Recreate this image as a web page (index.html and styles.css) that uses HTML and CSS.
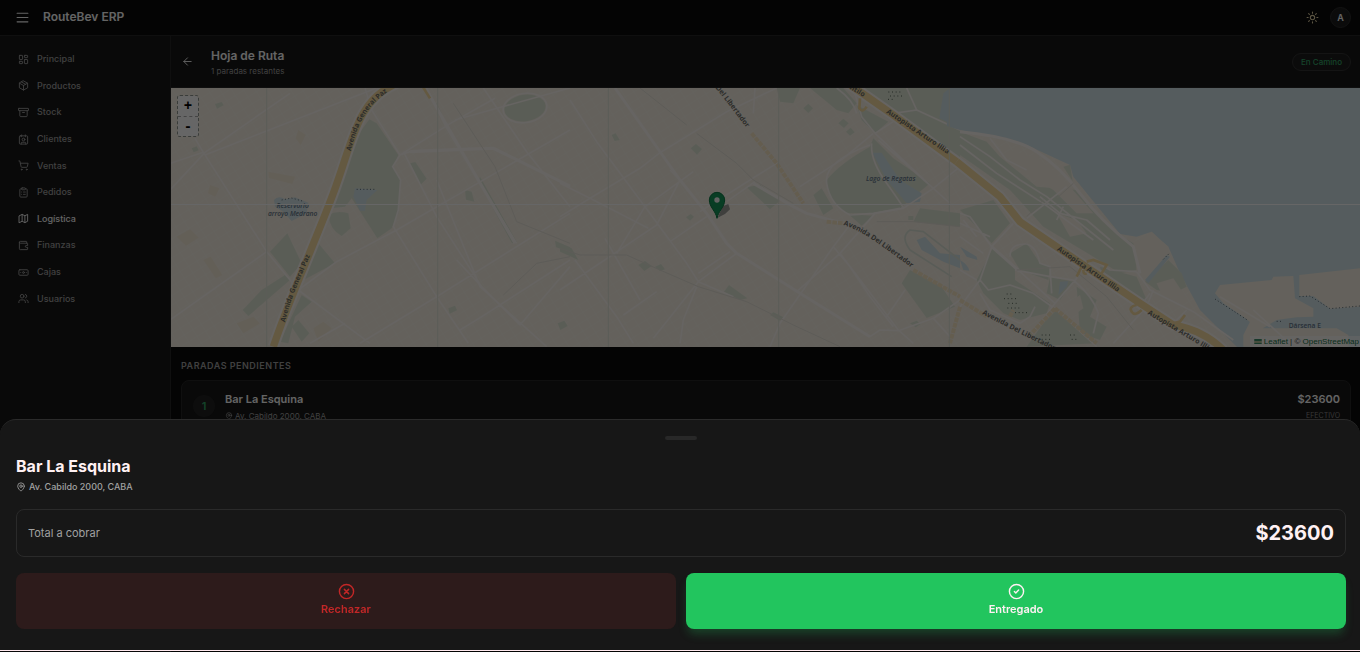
FILE: index.html
```html
<!DOCTYPE html>
<html lang="es">
<head>
    <meta charset="UTF-8">
    <meta name="viewport" content="width=device-width, initial-scale=1.0">
    <title>RouteBev ERP</title>
    <link rel="stylesheet" href="styles.css">
</head>
<body>
    <div class="app">
        <header class="topbar">
            <button class="icon-btn" aria-label="Menú">
                <svg class="icon menu-icon" viewBox="0 0 24 24"><path d="M2 4h20M2 12h20M2 20h20"/></svg>
            </button>
            <span class="brand">RouteBev ERP</span>
            <button class="icon-btn theme" aria-label="Tema">
                <svg class="icon" viewBox="0 0 24 24"><circle cx="12" cy="12" r="4"/><path d="M12 2v2M12 20v2M4.9 4.9l1.4 1.4M17.7 17.7l1.4 1.4M2 12h2M20 12h2M6.3 17.7l-1.4 1.4M19.1 4.9l-1.4 1.4"/></svg>
            </button>
            <button class="avatar">A</button>
        </header>

        <div class="body">
            <aside class="sidebar">
                <nav class="menu">
                    <a href="#"><svg class="icon" viewBox="0 0 24 24"><rect x="3" y="3" width="7" height="9" rx="1"/><rect x="14" y="3" width="7" height="5" rx="1"/><rect x="14" y="12" width="7" height="9" rx="1"/><rect x="3" y="16" width="7" height="5" rx="1"/></svg>Principal</a>
                    <a href="#"><svg class="icon" viewBox="0 0 24 24"><path d="M12 2l9 5v10l-9 5-9-5V7zM3.300 7L12 12l8.700-5M12 22V12M7.500 4.300l9 5.100"/></svg>Productos</a>
                    <a href="#"><svg class="icon" viewBox="0 0 24 24"><rect x="1" y="3" width="22" height="5" rx="1"/><path d="M4 8v11a2 2 0 0 0 2 2h12a2 2 0 0 0 2-2V8M10 12h4"/></svg>Stock</a>
                    <a href="#"><svg class="icon" viewBox="0 0 24 24"><rect x="3" y="4" width="18" height="18" rx="2"/><path d="M8 2v4M16 2v4M7 22v-2a2 2 0 0 1 2-2h6a2 2 0 0 1 2 2v2"/><circle cx="12" cy="12" r="3"/></svg>Clientes</a>
                    <a href="#"><svg class="icon" viewBox="0 0 24 24"><circle cx="8" cy="21" r="1"/><circle cx="19" cy="21" r="1"/><path d="M2 2h2l2.700 12.400a2 2 0 0 0 2 1.600h9.700a2 2 0 0 0 2-1.600L22 7H5.100"/></svg>Ventas</a>
                    <a href="#"><svg class="icon" viewBox="0 0 24 24"><rect x="8" y="2" width="8" height="4" rx="1"/><path d="M16 4h2a2 2 0 0 1 2 2v14a2 2 0 0 1-2 2H6a2 2 0 0 1-2-2V6a2 2 0 0 1 2-2h2M12 11h4M12 16h4M8 11h.1M8 16h.1"/></svg>Pedidos</a>
                    <a href="#" class="active"><svg class="icon" viewBox="0 0 24 24"><path d="M3 6l6-3 6 3 6-3v15l-6 3-6-3-6 3zM9 3v15M15 6v15"/></svg>Logística</a>
                    <a href="#"><svg class="icon" viewBox="0 0 24 24"><path d="M19 7V4a1 1 0 0 0-1-1H5a2 2 0 0 0 0 4h15a1 1 0 0 1 1 1v4h-3a2 2 0 0 0 0 4h3v4a1 1 0 0 1-1 1H5a2 2 0 0 1-2-2V5"/></svg>Finanzas</a>
                    <a href="#"><svg class="icon" viewBox="0 0 24 24"><rect x="2" y="6" width="20" height="12" rx="2"/><circle cx="12" cy="12" r="2"/><path d="M6 12h.1M18 12h.1"/></svg>Cajas</a>
                    <a href="#"><svg class="icon" viewBox="0 0 24 24"><circle cx="9" cy="7" r="4"/><path d="M2 21v-2a4 4 0 0 1 4-4h6a4 4 0 0 1 4 4v2M16 3.100a4 4 0 0 1 0 7.800M22 21v-2a4 4 0 0 0-3-3.900"/></svg>Usuarios</a>
                </nav>
            </aside>

            <main class="content">
                <div class="page-head">
                    <button class="icon-btn" aria-label="Volver">
                        <svg class="icon" viewBox="0 0 24 24"><path d="M20 12H4M12 20l-8-8 8-8"/></svg>
                    </button>
                    <div class="page-title">
                        <h1>Hoja de Ruta</h1>
                        <p>1 paradas restantes</p>
                    </div>
                    <span class="status">En Camino</span>
                </div>

                <div class="map">
                    <!-- 3 unidades por píxel -->
                    <svg class="map-canvas" viewBox="0 0 3567 777" preserveAspectRatio="xMidYMid slice">
                        <defs>
                            <pattern id="grid" width="30" height="24" patternUnits="userSpaceOnUse" patternTransform="rotate(-32)">
                                <path d="M0 0H30M0 0V24" class="street"/>
                            </pattern>
                            <path id="paz1" d="M542 214C560 150 575 90 652 36L700 8"/>
                            <path id="paz2" d="M345 728C365 640 400 580 425 515L440 470"/>
                            <path id="lib1" d="M466 24L480 40L580 170L600 196"/>
                            <path id="lib2" d="M850 435C920 455 990 520 1080 580"/>
                            <path id="illia0" d="M868 26L940 68L980 92"/>
                            <path id="illia1" d="M978 98L1190 241"/>
                            <path id="illia2" d="M290 510L500 654"/>
                            <path id="illia3" d="M562 702L790 838"/>
                            <path id="lib3" d="M66 702L170 756L290 815L330 835"/>
                        </defs>
                        <rect width="3567" height="777" class="land"/>
                        <rect width="3567" height="777" fill="url(#grid)"/>

                        <!-- zona oeste -->
                        <g transform="translate(-3 -24)">
                            <g class="block">
                                <path d="M295 275l80 15-8 22-70-18zM20 470l40-22 26 25-38 24zM100 540l22-10 35 55-20 10zM430 745l30-20 25 20-40 40zM385 150l22 15-15 30-15-20zM120 315l28 10-12 25-22-10zM200 730l50-20 20 20-50 30z"/>
                            </g>
                            <g class="park">
                                <path d="M598 118L620 130 685 225 670 260 690 300 685 400 665 445 622 475 545 355 525 380 480 385 520 280 560 170z"/>
                                <path d="M475 405Q500 390 535 400L542 445 515 468Q480 450 475 405zM352 460L395 550 360 590 300 515zM445 490L495 550 405 598zM345 585L360 600 235 708 218 690 275 630zM395 645L425 665 375 710 355 790 330 785zM365 740L385 720 418 760 395 785z"/>
                                <ellipse cx="1065" cy="84" rx="62" ry="40" transform="rotate(-8 1065 84)"/>
                                <path d="M135 72l20-6 6 10-20 10zM720 250l16-4 34 50-18 18zM885 330l20 5 8 30-25-6zM1155 482l45 20v14l-42-14zM835 685l20-8 6 14-22 10zM1163 730l20-8 10 16-22 12zM65 205l15-6 6 12-15 6zM800 70l20 40-8 5-16-40zM930 290l110 195-14 5-100-185z"/>
                            </g>
                            <path class="water" d="M312 360Q325 345 345 358L375 352 415 368 410 400 365 423 340 395 315 380zM555 325L622 330 590 360 585 392 570 392 550 350z"/>
                            <g class="road">
                                <path d="M0 330L105 217 360 40M100 217L290 515 385 630 600 790M0 720L290 515M385 630L500 545 680 450 1200 150M75 175L100 217L0 250M690 225L605 90 585 24M690 225L850 125 975 55M690 225L730 212 900 205 975 205 1200 320M690 225L668 260 692 300 685 390 670 440 800 650 895 790M420 790L525 730M570 790L800 650 1200 400M800 300L930 620 1130 800M940 24L1070 215 1200 380M770 24L830 145 1040 490M855 120L1200 24M870 750L935 710 1200 540M105 225L620 24M700 215L800 410 935 620 1050 735 1200 560M935 620L860 540"/>
                                <ellipse cx="1065" cy="84" rx="66" ry="44" transform="rotate(-8 1065 84)"/>
                            </g>
                            <path class="road wide" d="M770 30L870 205 1035 490M720 215L970 205 1200 318"/>
                            <path class="rail" d="M850 70L975 260 1040 425 1200 490M1000 645L1100 550 1200 530"/>
                            <path class="highway-edge" d="M310 800C360 650 430 500 490 340S560 60 680 10"/>
                            <path class="highway" d="M310 800C360 650 430 500 490 340S560 60 680 10"/>
                            <path class="highway thin" d="M755 15l25 40"/>
                            <path class="dock" d="M335 360l30-6 35 10M560 328h60"/>
                            <text class="street-name"><textPath href="#paz1">Avenida General Paz</textPath></text>
                            <text class="street-name"><textPath href="#paz2">Avenida General Paz</textPath></text>
                            <text class="water-name" x="368" y="384" text-anchor="middle">Reservorio</text>
                            <text class="water-name" x="368" y="409" text-anchor="middle">arroyo Medrano</text>
                        </g>

                        <!-- zona centro -->
                        <g transform="translate(1167 -24)">
                            <g class="park">
                                <path d="M650 24H720L700 70 660 65zM750 24L850 24 890 70 865 100 830 90zM940 175L1000 235 1110 310 1020 385 940 400 860 400Q800 360 800 300 840 250 930 200zM870 24H1200V250L1000 110zM890 75L985 125 945 160 905 120zM560 322l40-8 60 48-30 26-20-20zM760 345l25-20 35 60-30 20zM865 402l75 5-35 30zM1050 570L1145 620 1185 680 1100 714 1025 610zM1080 385L1200 400V440L1060 425z"/>
                                <path d="M392 205l16-13 18 15-15 17zM155 165l12-5 12 20-15 3zM235 555l20-12 20 15-22 15zM285 560l18-8 12 16-15 5zM492 635l15-20 55 40-22 5zM378 412l14-10 10 8-12 12zM835 130l15-14 16 14-14 14zM858 155l14-12 12 14-14 10zM730 85l15-14 14 14-14 14zM0 490l35 15 20 35-55-25zM630 705l10-8 30 15-10 10zM1045 408h15v12h-15zM1050 730l20-8 12 10-15 10z"/>
                            </g>
                            <path class="water" d="M937 218L965 218 1020 300 1085 340 1080 365 1040 370 980 300zM1150 40L1170 24H1200V145L1138 115zM1070 480L1095 470 1140 520 1200 525V565L1150 545 1085 510z"/>
                            <g class="road">
                                <path d="M0 410L90 355 240 265 300 218 500 95 650 24M30 60L110 185 255 380 380 550 415 605M0 310L90 355 265 445M45 540L170 710 220 790M0 630L290 435 360 300 330 270M135 475L240 660M170 520L255 380 400 275M190 705L290 635M420 395L650 250M330 485L440 410M500 365L585 305M415 605L530 520M415 580L510 515M585 24L580 100M360 790L370 720 410 620M630 800L660 730 820 500 865 440M840 520L945 400 1020 385M280 775L415 605 520 650M710 635L840 520M840 520L1015 750 1060 790M980 710L1035 630M930 770L960 750 1015 752 1120 715 1200 660M1120 715L1170 770M720 320L850 235 940 160M820 500L870 560 930 650 1000 740"/>
                                <path d="M930 195Q790 245 800 310T870 405L940 400 1030 385 1120 325 1200 260M935 190Q930 240 980 310T1030 385M955 180L1120 325M880 24L905 110 945 160 1000 125M830 24Q880 60 890 100M945 160L1120 325 1170 370M1040 24L1070 90 1200 150M1000 100L1070 90"/>
                                <path d="M1175 590L1050 510Q1020 470 1050 450L1090 455 1200 540" class="track"/>
                            </g>
                            <path class="road wide" d="M165 24L360 300 440 400 500 490 530 520 720 640 930 770M580 310L700 380 740 400 850 430"/>
                            <path class="rail" d="M240 24L380 135M410 160L530 250 580 300 700 370M0 505L60 525 200 525 300 570 415 620 560 665 700 735 840 800M950 425L1060 425 1200 440"/>
                            <path class="avenue" d="M575 160L650 250 730 370M800 425L850 430M1060 570L1200 650M1200 680L1170 790"/>
                            <path class="highway-edge" d="M850 0L1000 105 1210 260"/>
                            <path class="highway" d="M850 0L1000 105 1210 260"/>
                            <path class="highway thin" d="M900 55L898 85Q908 100 920 80"/>
                            <text class="street-name"><textPath href="#lib1">Del Libertador</textPath></text>
                            <text class="street-name"><textPath href="#lib2">Avenida Del Libertador</textPath></text>
                            <text class="street-name"><textPath href="#illia0">ntilo</textPath></text>
                            <text class="street-name"><textPath href="#illia1">Autopista Arturo Illia</textPath></text>
                            <text class="water-name" x="992" y="302" text-anchor="middle">Lago de Regatas</text>
                            <g class="trees"><path d="M985 36h40M990 48h36M984 58h22"/></g>
                        </g>

                        <!-- costanera y río -->
                        <g transform="translate(2367 -24)">
                            <path class="water" d="M-30 24H1210V820H850L720 690 660 580 625 500 575 455 530 470 480 462 340 290 330 255 200 195 0 150-40 138z"/>
                            <path class="park" d="M0 155L80 185 120 230 230 320 350 330 470 460 520 490 530 570 480 580 400 530 250 440 150 330 0 225zM310 260l20-6 8 50zM0 390L100 360 150 430 95 490 50 440zM100 500L165 560 165 600 270 670 260 700 180 720 130 700 70 640 50 600zM150 520L200 490 240 550 270 560 265 600 180 570zM270 590L340 605 300 660 260 640zM555 605L625 540 665 580 680 620 640 640 590 630zM420 560L530 590 560 660 480 640 430 600zM350 620L410 660 390 710 440 740 420 780 360 760zM250 730L290 690 410 790 200 800z"/>
                            <path class="land" d="M150 210L240 240 330 320 400 400 350 400 280 330 160 260zM530 490L575 455 600 480 625 500 625 525 560 600 530 570zM765 640L780 615 935 600 940 590 1000 588 1005 655 1060 685 1060 710 1010 712 950 720 900 750 850 710 790 670zM1018 585L1200 565V680L1110 686 1060 648 1018 648zM850 765L870 725 900 745 1130 745 1165 765 1165 800 850 800z"/>
                            <path class="land" d="M290 400l60 20 30 40-50 10zM590 610l50-15 40 60-60 20zM330 665l30-20 10 40-20 15z"/>
                            <path class="water" d="M555 600L620 525 630 530 565 610zM300 605L325 603 320 620 295 645zM0 500L50 530 52 540 20 530zM0 540Q25 555 28 572L10 570z"/>
                            <g class="road">
                                <path d="M0 170L90 230 180 300 260 350 460 510M0 195L110 280 250 370 400 480M90 175L140 240 200 270M240 350L300 400 380 420 450 480M200 415L320 320M290 420L310 380"/>
                                <path d="M95 500L160 430M95 500L60 600 0 680M95 500L30 410 0 400M95 500L180 575 285 670 350 595 360 570M0 430L90 470M10 420L50 470M60 600L85 630 150 615 220 640 290 690M150 530Q150 490 200 492 230 500 240 550L270 560 275 640M165 570L270 590 340 600M60 640L90 690 180 730 210 710 225 680M285 670L210 770M340 600Q400 650 415 700L400 760M290 690L410 800M400 540L450 570 530 575M530 575L570 630 700 695 820 780M580 630L560 680 460 790M680 690L640 730M570 640L555 660M0 470L70 520M50 600L0 570"/>
                                <path d="M880 690L1000 800M780 650l150 90"/>
                            </g>
                            <path class="road wide" d="M0 155Q160 170 230 215T360 340 520 500L540 580M95 500L180 575"/>
                            <path class="rail" d="M170 570L330 560 440 650 520 750M200 410L250 360M290 355L340 310"/>
                            <path class="avenue" d="M0 660L80 710M285 685L210 765M285 685L410 790M150 710L160 690"/>
                            <path class="highway-edge" d="M-10 245L120 350 180 425 370 555 540 670 640 735Q730 750 790 810"/>
                            <path class="highway" d="M-10 245L120 350 180 425 370 555 540 670 640 735Q730 750 790 810"/>
                            <path class="highway thin" d="M370 550L350 590M380 545L400 540 440 555 425 580M530 675Q505 680 515 695T545 690M640 730L660 725 675 705M370 570Q370 585 380 580"/>
                            <g class="trees"><path d="M140 642h20M132 656h40M145 670h28M142 684h36M165 698h42M245 765h28M245 778h30M330 765h20M335 778h18"/></g>
                            <path class="dock" d="M765 657L865 722M1018 650L1050 648 1110 686 1200 678M950 724h20M610 538l20-20"/>
                            <text class="street-name"><textPath href="#illia2">Autopista Arturo Illia</textPath></text>
                            <text class="street-name"><textPath href="#illia3">Autopista Arturo Illia</textPath></text>
                            <text class="street-name"><textPath href="#lib3">Avenida Del Libertador</textPath></text>
                            <text class="water-name plain" x="986" y="744">Dársena E</text>
                        </g>

                        <!-- uniones de teselas -->
                        <path class="tile-v" d="M287 0V777M800 0V777M1312 0V777M1823 0V777M2335 0V777"/>
                        <path class="tile-h" d="M0 349.500H3567"/>

                        <!-- marcador -->
                        <path class="pin-shadow" d="M1640 389L1655 355 1672 348 1677 364 1662 378z"/>
                        <path class="pin" d="M1638 391C1634 368 1615 358 1615 336a23 23 0 0 1 46 0C1661 358 1642 368 1638 391z"/>
                        <circle class="pin-hole" cx="1638" cy="336" r="8"/>
                    </svg>
                    <div class="zoom-control">
                        <button aria-label="Acercar">+</button>
                        <button aria-label="Alejar">-</button>
                    </div>
                    <div class="attribution">
                        <svg class="flag" viewBox="0 0 12 8"><path fill="#3f8f6b" d="M0 0h12v4H0z"/><path fill="#c9c28a" d="M0 4h12v2H0z"/><path fill="#3f8f6b" d="M0 6h12v2H0z"/></svg>
                        <a href="#">Leaflet</a> | © <a href="#">OpenStreetMap</a>
                    </div>
                </div>

                <section class="stops">
                    <h2>PARADAS PENDIENTES</h2>
                    <article class="stop">
                        <span class="stop-num">1</span>
                        <div class="stop-info">
                            <h3>Bar La Esquina</h3>
                            <p><svg class="icon" viewBox="0 0 24 24"><path d="M20 10c0 6-8 12-8 12s-8-6-8-12a8 8 0 0 1 16 0z"/><circle cx="12" cy="10" r="3"/></svg>Av. Cabildo 2000, CABA</p>
                        </div>
                        <div class="stop-total">
                            <strong>$23600</strong>
                            <small>EFECTIVO</small>
                        </div>
                    </article>
                </section>
            </main>
        </div>
    </div>

    <div class="backdrop"></div>

    <div class="sheet" role="dialog" aria-labelledby="sheet-title">
        <div class="handle"></div>
        <h2 id="sheet-title">Bar La Esquina</h2>
        <p class="address"><svg class="icon" viewBox="0 0 24 24"><path d="M20 10c0 6-8 12-8 12s-8-6-8-12a8 8 0 0 1 16 0z"/><circle cx="12" cy="10" r="3"/></svg>Av. Cabildo 2000, CABA</p>
        <div class="total">
            <span>Total a cobrar</span>
            <strong>$23600</strong>
        </div>
        <div class="actions">
            <button class="reject">
                <svg class="icon" viewBox="0 0 24 24"><circle cx="12" cy="12" r="10"/><path d="M15 9l-6 6M9 9l6 6"/></svg>
                Rechazar
            </button>
            <button class="deliver">
                <svg class="icon" viewBox="0 0 24 24"><circle cx="12" cy="12" r="10"/><path d="M9 12l2 2 4-4"/></svg>
                Entregado
            </button>
        </div>
    </div>
</body>
</html>
```
FILE: styles.css
```css
* {
    box-sizing: border-box;
    margin: 0;
    padding: 0;
}
body {
    font-family: Inter, sans-serif;
    font-size: 9px;
    line-height: 14px;
    color: #fafafa;
    background: #0a0a0a;
    height: 100vh;
    overflow: hidden;
}
button {
    font: inherit;
    color: inherit;
    border: none;
    background: none;
    cursor: pointer;
}
a {
    color: inherit;
    text-decoration: none;
}
.icon {
    width: 11px;
    height: 11px;
    fill: none;
    stroke: currentColor;
    stroke-width: 2;
    stroke-linecap: round;
    stroke-linejoin: round;
    flex-shrink: 0;
}
.icon-btn {
    display: flex;
    align-items: center;
    justify-content: center;
    width: 24px;
    height: 24px;
}
.app {
    display: flex;
    flex-direction: column;
    height: 100%;
}

/* Barra superior */
.topbar {
    display: flex;
    align-items: center;
    height: 36px;
    padding: 0 9px 0 10px;
    border-bottom: 1px solid #262626;
}
.brand {
    font-size: 12px;
    font-weight: 600;
    margin-left: 9px;
    padding-bottom: 1px;
}
.theme {
    margin-left: auto;
    margin-right: 6px;
    color: #e5d5a8;
}
.menu-icon,
.theme .icon {
    width: 13px;
    height: 13px;
}
.avatar {
    width: 21px;
    height: 21px;
    border: 1px solid #2e2e2e;
    border-radius: 50%;
    background: #1c1c1c;
    font-weight: 600;
}

/* Menú lateral */
.body {
    display: flex;
    flex: 1;
    min-height: 0;
}
.sidebar {
    width: 171px;
    flex-shrink: 0;
    padding: 10px;
    background: #171717;
    border-right: 1px solid #262626;
}
.menu {
    display: grid;
    grid-template-rows: repeat(10, 1fr);
    height: 266px;
}
.menu a {
    display: flex;
    align-items: center;
    gap: 8px;
    padding: 0 8px;
    font-weight: 500;
    color: #a1a1a1;
}
.menu a.active {
    color: #fafafa;
}

/* Contenido */
.content {
    flex: 1;
    min-width: 0;
}
.page-head {
    display: flex;
    align-items: center;
    height: 52px;
    padding: 0 9px 0 4px;
    background: #171717;
    border-bottom: 1px solid #262626;
}
.page-title {
    flex: 1;
    margin-left: 12px;
    padding-top: 2px;
}
.page-title h1 {
    font-size: 12px;
    line-height: 16px;
    font-weight: 600;
}
.page-title p {
    font-size: 8px;
    color: #a1a1a1;
}
.status {
    padding: 1px 8px;
    border: 1px solid #333;
    border-radius: 9px;
    background: #1c1c1c;
    font-size: 8px;
    font-weight: 500;
    color: #35a86b;
}

/* Mapa */
.map {
    position: relative;
    height: 259px;
    overflow: hidden;
}
.map-canvas {
    display: block;
    width: 100%;
    height: 100%;
    fill: none;
}
.land { fill: #f9f3e6; }
.water { fill: #d5e6ea; }
.park { fill: #e2e9d8; }
.block { fill: #f8edda; }
.street { stroke: #fcf8f1; stroke-width: 2; }
.road { stroke: #fff9f4; stroke-width: 5; stroke-linejoin: round; }
.wide { stroke-width: 9; }
.track { stroke: #dfe6da; }
.rail { stroke: #e9e5db; stroke-width: 3; }
.avenue { stroke: #f9e8c6; stroke-width: 12; stroke-dasharray: 14 3; }
.highway-edge { stroke: #fffaf4; stroke-width: 34; }
.highway { stroke: #f9dfa2; stroke-width: 22; }
.thin { stroke-width: 8; }
.trees { stroke: #5d6a5c; stroke-width: 3; stroke-dasharray: 3 8; }
.dock { stroke: #5d6d78; stroke-width: 3; stroke-dasharray: 3 7; }
.tile-v { stroke: #e4e6da; stroke-width: 3; }
.tile-h { stroke: #fff; stroke-width: 3; }
.street-name {
    font: 700 21px "Open Sans", sans-serif;
    fill: #6f6f6a;
}
.water-name {
    font: italic 600 20px "Open Sans", sans-serif;
    fill: #66788a;
}
.plain { font-style: normal; }
.pin { fill: #16995a; stroke: #0c7a45; stroke-width: 3; }
.pin-hole { fill: #f4f4f4; }
.pin-shadow { fill: #777; opacity: 0.7; }
.zoom-control {
    position: absolute;
    top: 7px;
    left: 6px;
    border: 1px dashed #8f9691;
    border-radius: 3px;
    overflow: hidden;
}
.zoom-control button {
    display: block;
    width: 20px;
    height: 20px;
    background: #fff;
    color: #000;
    font: bold 14px/20px "Liberation Mono", monospace;
}
.zoom-control button + button {
    border-top: 1px dashed #aaa;
}
.attribution {
    position: absolute;
    right: 0;
    bottom: 0;
    padding: 0 1px 0 4px;
    background: rgba(255, 255, 255, 0.6);
    font-family: "Liberation Sans", sans-serif;
    font-size: 8px;
    line-height: 11px;
    color: #444;
}
.attribution a {
    color: #157347;
}
.flag {
    width: 8px;
    height: 5px;
}

/* Paradas */
.stops {
    padding: 12px 9px 0 10px;
}
.stops h2 {
    font-size: 9px;
    font-weight: 600;
    letter-spacing: 0.5px;
    color: #a1a1a1;
}
.stop {
    display: flex;
    align-items: flex-start;
    margin-top: 7px;
    padding: 11px 10px 20px 11px;
    border: 1px solid #262626;
    border-radius: 8px;
    background: #171717;
}
.stop-num {
    width: 22px;
    height: 22px;
    margin-top: 3px;
    border-radius: 50%;
    background: #222;
    color: #2fa868;
    font-size: 11px;
    line-height: 22px;
    font-weight: 600;
    text-align: center;
}
.stop-info {
    flex: 1;
    margin-left: 10px;
}
.stop-info h3,
.stop-total strong {
    font-size: 11px;
    font-weight: 600;
}
.stop-info p {
    display: flex;
    align-items: center;
    gap: 2px;
    margin-top: 3px;
    font-size: 8px;
    color: #a1a1a1;
}
.stop-info .icon {
    width: 8px;
    height: 8px;
}
.stop-total {
    display: flex;
    flex-direction: column;
    align-items: flex-end;
}
.stop-total small {
    margin-top: 3px;
    font-size: 7px;
    color: #8a8a8a;
}

/* Panel inferior */
.backdrop {
    position: fixed;
    inset: 0;
    background: rgba(0, 0, 0, 0.6);
}
.sheet {
    position: fixed;
    left: 0;
    right: 0;
    bottom: 1px;
    padding: 16px 14px 21px 16px;
    background: #171717;
    border-top: 1px solid #2b2b2b;
    border-bottom: 1px solid #ffe9ee;
    border-radius: 16px 16px 0 0;
}
.handle {
    width: 32px;
    height: 4px;
    margin: 0 auto 16px;
    border-radius: 2px;
    background: #282828;
}
.sheet h2 {
    font-size: 16px;
    line-height: 20px;
    font-weight: 700;
    color: #fff1f3;
}
.address {
    display: flex;
    align-items: center;
    gap: 3px;
    margin: 4px 0 15px;
    font-weight: 500;
    color: #a1a1a1;
}
.address .icon {
    width: 10px;
    height: 10px;
}
.total {
    display: flex;
    align-items: center;
    justify-content: space-between;
    height: 48px;
    padding: 0 11px;
    border: 1px solid #2a2a2a;
    border-radius: 8px;
}
.total span {
    font-size: 11px;
    color: #a1a1a1;
}
.total strong {
    font-size: 20px;
    font-weight: 700;
    color: #fff1f3;
}
.actions {
    display: grid;
    grid-template-columns: 1fr 1fr;
    gap: 10px;
    margin-top: 16px;
}
.actions button {
    display: flex;
    flex-direction: column;
    align-items: center;
    justify-content: center;
    gap: 2px;
    height: 56px;
    padding-bottom: 4px;
    border-radius: 8px;
    font-size: 11px;
    font-weight: 600;
}
.actions .icon {
    width: 17px;
    height: 17px;
}
.actions .reject {
    background: #2d1b1b;
    color: #c22727;
}
.actions .deliver {
    background: #22c55e;
    color: #fff1f3;
    box-shadow: 0 7px 10px -2px rgba(34, 197, 94, 0.25);
}
```
